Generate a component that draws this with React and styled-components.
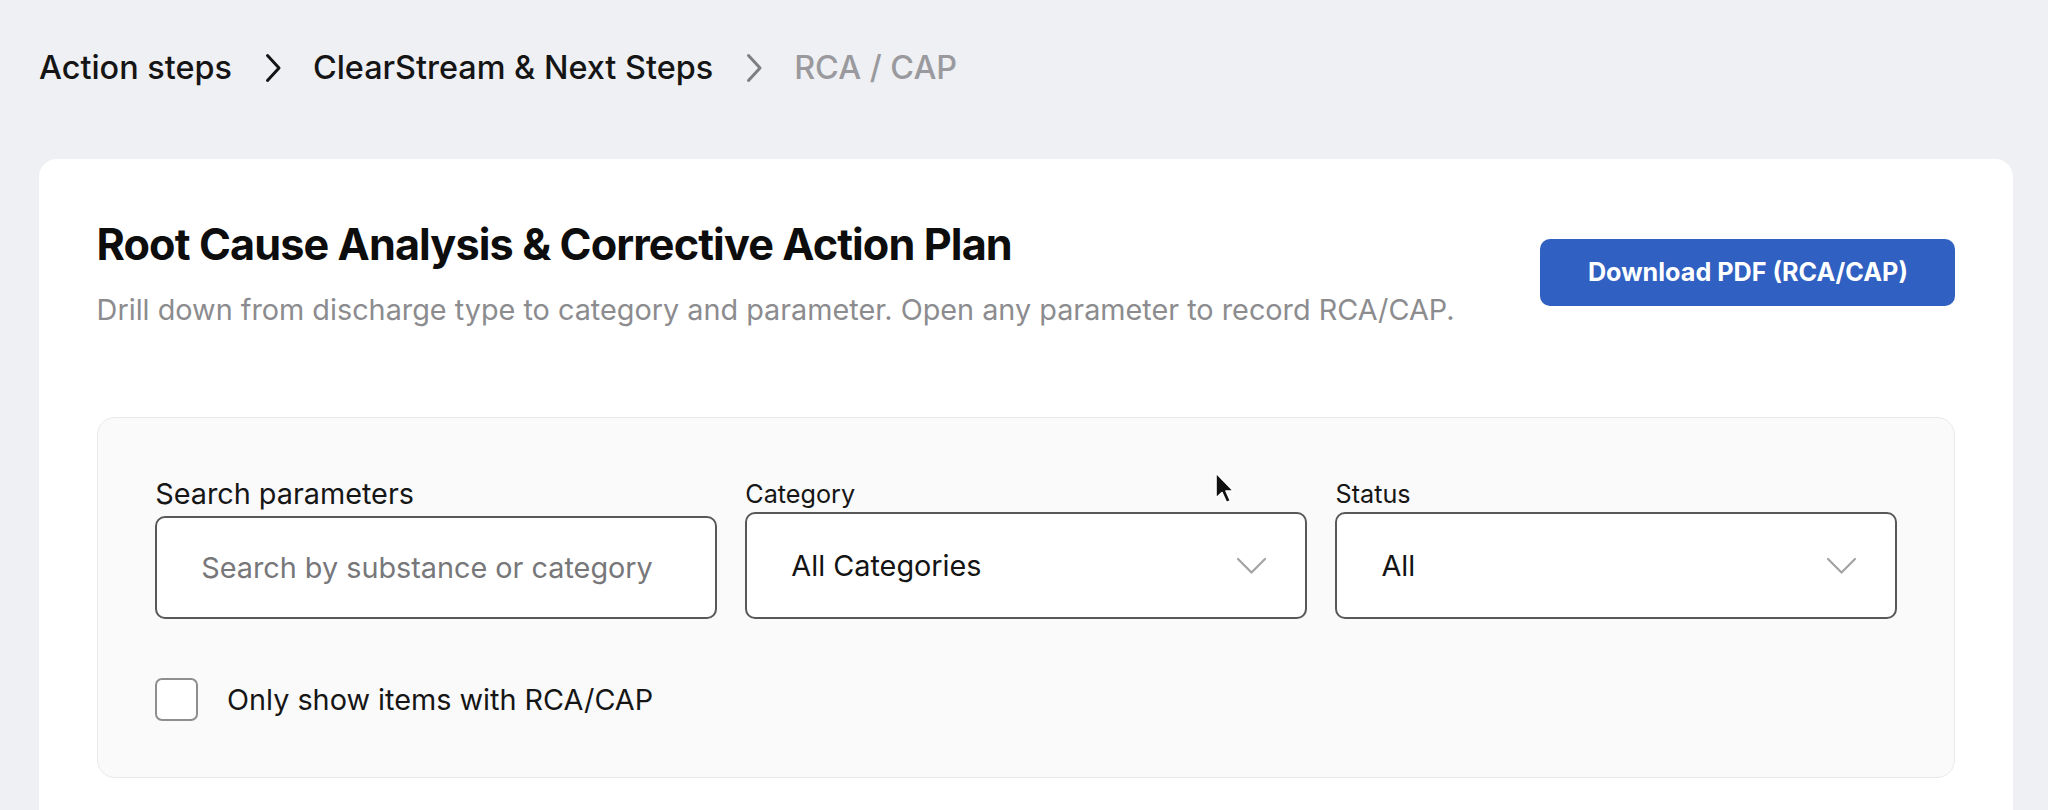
import React from "react";
import styled, { createGlobalStyle } from "styled-components";

const Global = createGlobalStyle`
  html, body { margin: 0; padding: 0; }
  body {
    background: #eff0f3;
    font-family: Inter, "Noto Sans", "Liberation Sans", sans-serif;
    color: #111;
    -webkit-font-smoothing: antialiased;
  }
`;

const Page = styled.div`
  position: relative;
  min-height: 810px;
  padding: 47px 35px 0 39px;
  box-sizing: border-box;
  overflow: hidden;
`;

const Crumbs = styled.nav`
  display: flex;
  align-items: center;
  height: 40px;
`;

const Crumb = styled.span`
  font-size: 32.4px;
  font-weight: 500;
  color: ${(p) => (p.$current ? "#9a9a9e" : "#151515")};
`;

const Sep = styled.span`
  display: flex;
  align-items: center;
  margin: 2px 31px 0 33px;
  color: ${(p) => (p.$muted ? "#7e7e82" : "#151515")};
`;

const Card = styled.section`
  margin-top: 72px;
  background: #ffffff;
  border-radius: 18px;
  padding: 59px 57.6px 80px 57.6px;
  min-height: 700px;
  box-sizing: border-box;
`;

const Header = styled.header`
  display: flex;
  align-items: center;
  justify-content: space-between;
`;

const Titles = styled.div`
  display: flex;
  flex-direction: column;
`;

const Title = styled.h1`
  margin: 0;
  font-size: 43.2px;
  line-height: 52px;
  font-weight: 700;
  letter-spacing: -0.9px;
  color: #0d0d0d;
`;

const Subtitle = styled.p`
  margin: 20px 0 0;
  font-size: 28.8px;
  line-height: 40px;
  color: #8c8c8f;
`;

const PrimaryButton = styled.button`
  width: 415px;
  height: 67px;
  margin-top: -4px;
  border: none;
  border-radius: 10px;
  background: #2f60c2;
  color: #ffffff;
  font-family: inherit;
  font-size: 25.2px;
  font-weight: 700;
  cursor: pointer;
`;

const FilterPanel = styled.div`
  margin-top: 87px;
  background: #fafafb;
  border: 1px solid #e9e9ec;
  border-radius: 18px;
  padding: 58px 57.6px 56px 57.6px;
`;

const FilterGrid = styled.div`
  display: grid;
  grid-template-columns: repeat(3, 1fr);
  column-gap: 28.8px;
  align-items: end;
`;

const Field = styled.label`
  display: flex;
  flex-direction: column;
`;

const FieldLabel = styled.span`
  font-size: ${(p) => (p.$large ? "28.8px" : "25.2px")};
  line-height: ${(p) => (p.$large ? "36px" : "32px")};
  margin-bottom: ${(p) => (p.$large ? "4px" : "2px")};
  color: #161616;
`;

const boxStyles = `
  box-sizing: border-box;
  border: 2px solid #58585b;
  border-radius: 10px;
  background: #ffffff;
  font-family: inherit;
  font-size: 28.8px;
  padding: 0 38px 0 44px;
`;

const TextInput = styled.input`
  ${boxStyles}
  height: 103px;
  color: #222;
  outline: none;
  &::placeholder { color: #77777a; }
`;

const Select = styled.div`
  ${boxStyles}
  height: 107px;
  display: flex;
  align-items: center;
  justify-content: space-between;
  color: #141414;
`;

const CheckRow = styled.div`
  display: flex;
  align-items: center;
  gap: 28.8px;
  margin-top: 59px;
`;

const CheckBox = styled.span`
  width: 43px;
  height: 43px;
  box-sizing: border-box;
  border: 2px solid #8e8e91;
  border-radius: 7px;
  background: #ffffff;
`;

const CheckLabel = styled.span`
  font-size: 28.8px;
  color: #161616;
`;

const Pointer = styled.svg`
  position: absolute;
  left: 1214px;
  top: 471px;
  pointer-events: none;
`;

const Chevron = ({ muted }) => (
  <Sep $muted={muted}>
    <svg width="17" height="30" viewBox="0 0 17 30" fill="none">
      <path d="M2.5 2.5 L14 15 L2.5 27.5" stroke="currentColor" strokeWidth="3" strokeLinecap="round" strokeLinejoin="round" />
    </svg>
  </Sep>
);

const Caret = () => (
  <svg width="31" height="18" viewBox="0 0 31 18" fill="none">
    <path d="M2 2 L15.5 15.5 L29 2" stroke="#a3a3a6" strokeWidth="2.2" strokeLinecap="round" strokeLinejoin="round" />
  </svg>
);

export default function App() {
  return (
    <>
      <Global />
      <Page>
        <Crumbs>
          <Crumb>Action steps</Crumb>
          <Chevron />
          <Crumb>ClearStream &amp; Next Steps</Crumb>
          <Chevron muted />
          <Crumb $current>RCA / CAP</Crumb>
        </Crumbs>

        <Card>
          <Header>
            <Titles>
              <Title>Root Cause Analysis &amp; Corrective Action Plan</Title>
              <Subtitle>
                Drill down from discharge type to category and parameter. Open any parameter to record RCA/CAP.
              </Subtitle>
            </Titles>
            <PrimaryButton>Download PDF (RCA/CAP)</PrimaryButton>
          </Header>

          <FilterPanel>
            <FilterGrid>
              <Field>
                <FieldLabel $large>Search parameters</FieldLabel>
                <TextInput placeholder="Search by substance or category" />
              </Field>
              <Field>
                <FieldLabel>Category</FieldLabel>
                <Select>
                  All Categories
                  <Caret />
                </Select>
              </Field>
              <Field>
                <FieldLabel>Status</FieldLabel>
                <Select>
                  All
                  <Caret />
                </Select>
              </Field>
            </FilterGrid>
            <CheckRow>
              <CheckBox />
              <CheckLabel>Only show items with RCA/CAP</CheckLabel>
            </CheckRow>
          </FilterPanel>
        </Card>

        <Pointer width="22" height="34" viewBox="0 0 22 34">
          <path d="M2 2 L2 27 L8 21.5 L12.5 31.5 L16.5 29.8 L12 20 L19.5 20 Z" fill="#111" stroke="#fff" strokeWidth="1.6" strokeLinejoin="round" />
        </Pointer>
      </Page>
    </>
  );
}
